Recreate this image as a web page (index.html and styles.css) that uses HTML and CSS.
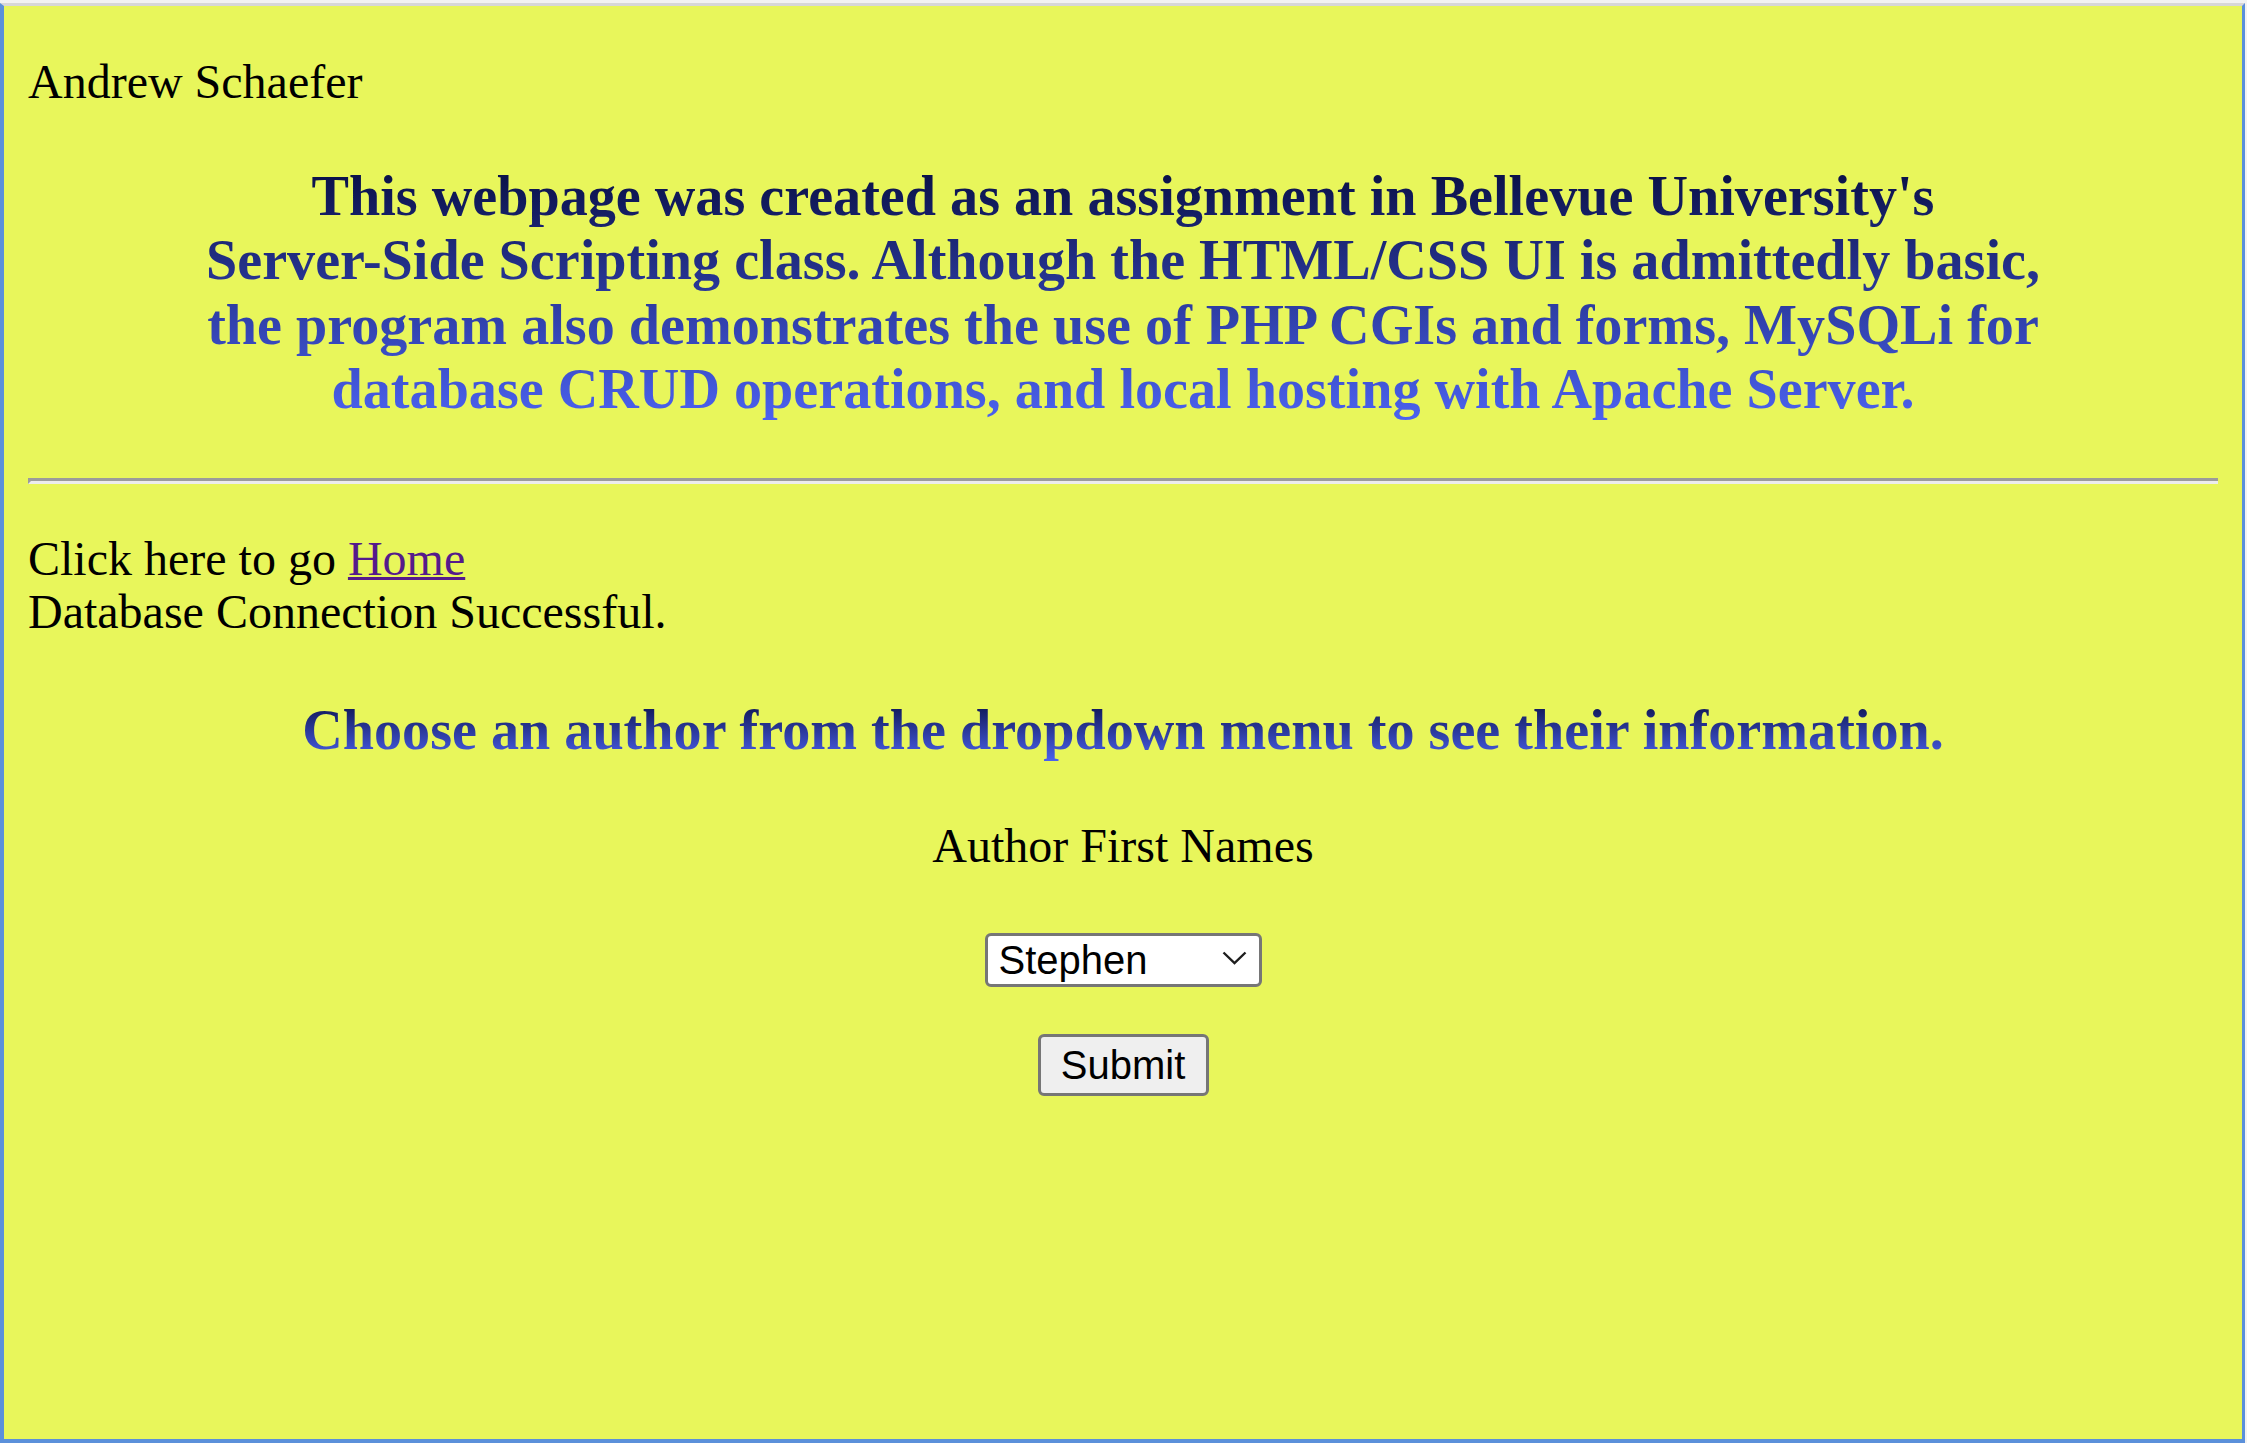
FILE: index.html
```html
<!DOCTYPE html>
<html lang="en">
<head>
<meta charset="utf-8">
<title>Authors</title>
<link rel="stylesheet" href="styles.css">
</head>
<body>
<div class="window">
  <p class="name">Andrew Schaefer</p>
  <h3 class="intro grad">This webpage was created as an assignment in Bellevue University's<br>Server-Side Scripting class. Although the HTML/CSS UI is admittedly basic, the program also demonstrates the use of PHP CGIs and forms, MySQLi for database CRUD operations, and local hosting with Apache Server.</h3>
  <hr class="rule">
  <p class="nav">Click here to go <a class="home" href="#">Home</a><br>Database Connection Successful.</p>
  <h3 class="prompt grad">Choose an author from the dropdown menu to see their information.</h3>
  <form class="author-form">
    <label class="label" for="author">Author First Names</label>
    <div class="select-wrap">
      <select class="select" id="author"><option>Stephen</option></select>
      <svg class="chev" width="25" height="14" viewBox="0 0 25 14"><polyline points="1.5,1.5 12.5,12 23.5,1.5" fill="none" stroke="#1e1e1e" stroke-width="2.4"/></svg>
    </div>
    <button class="submit" type="button">Submit</button>
  </form>
</div>
</body>
</html>
```
FILE: styles.css
```css
html, body {
  margin: 0;
  padding: 0;
}
body {
  background: #f2f2f2;
  padding: 3px 2px 0 0;
  font-family: "Liberation Serif", "Times New Roman", serif;
  font-size: 48px;
  line-height: 53px;
  color: #000;
}
.window {
  box-sizing: border-box;
  height: 1440px;
  background: #e8f65b;
  border-top: 3px solid #d7d7d7;
  border-left: 4px solid #5b90da;
  border-right: 3px solid #5b90da;
  border-bottom: 4px solid #5b90da;
  padding: 0 24px;
}
.name {
  margin: 49px 0 0;
}
.grad {
  background: linear-gradient(to bottom, #080e42, #4c63f2);
  -webkit-background-clip: text;
  background-clip: text;
  color: transparent;
}
.intro {
  max-width: 1885px;
  margin: 56px auto 0;
  font-size: 56.16px;
  line-height: 64.4px;
  font-weight: bold;
  text-align: center;
}
.rule {
  margin: 56px 0 0;
  height: 0;
  border-style: solid;
  border-width: 3px 0 3px 3px;
  border-color: #9b9b9b #ececec #ececec #9b9b9b;
}
.nav {
  margin: 48px 0 0;
}
.home {
  color: #551a8b;
  text-decoration: underline;
  text-decoration-thickness: 3px;
}
.prompt {
  margin: 60px 0 0;
  font-size: 56.16px;
  line-height: 64.4px;
  font-weight: bold;
  text-align: center;
}
.author-form {
  display: flex;
  flex-direction: column;
  align-items: center;
}
.label {
  margin-top: 57px;
}
.select-wrap {
  position: relative;
  margin-top: 59px;
  width: 277px;
  height: 54px;
}
.select {
  -webkit-appearance: none;
  appearance: none;
  box-sizing: border-box;
  width: 277px;
  height: 54px;
  margin: 0;
  padding: 0 0 0 11px;
  border: 3px solid #767676;
  border-radius: 6px;
  background: #fff;
  color: #000;
  font-family: "Liberation Sans", Arial, sans-serif;
  font-size: 40px;
}
.chev {
  position: absolute;
  right: 15px;
  top: 20px;
  pointer-events: none;
}
.submit {
  box-sizing: border-box;
  margin-top: 49px;
  width: 171px;
  height: 62px;
  padding: 0;
  border: 3px solid #767676;
  border-radius: 6px;
  background: #efefef;
  color: #000;
  font-family: "Liberation Sans", Arial, sans-serif;
  font-size: 40px;
}
```
